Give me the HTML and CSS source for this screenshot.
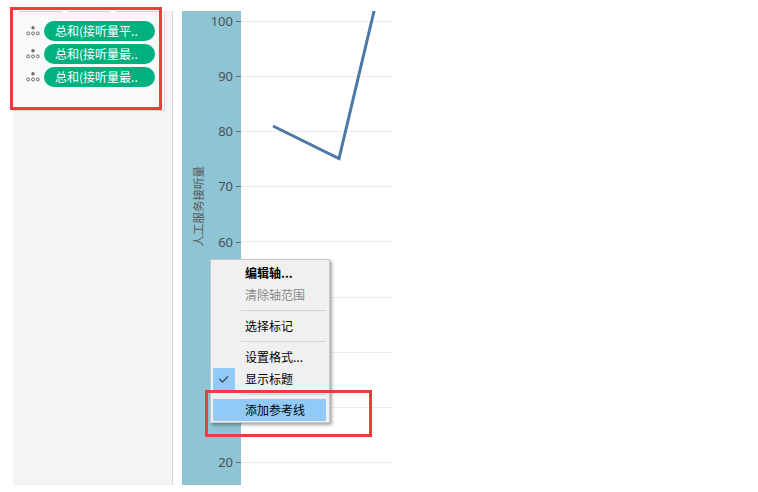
FILE: index.html
```html
<!DOCTYPE html>
<html lang="zh-CN">
<head>
  <meta charset="UTF-8">
  <meta name="viewport" content="width=device-width, initial-scale=1.0">
  <title>人工服务接听量</title>
  <link rel="stylesheet" href="styles.css">
</head>
<body>
  <div class="page">
    <aside class="shelf">
      <div class="card">
        <div class="card-head"><span></span><span></span><span></span></div>
        <ul class="pills">
          <li class="pill-row">
            <svg class="mn-icon" width="14" height="12" viewBox="0 0 14 12"><circle cx="7" cy="2.8" r="1.7" fill="#6f6f6f"/><circle cx="2.2" cy="8.4" r="1.5" fill="none" stroke="#6f6f6f"/><circle cx="7" cy="8.4" r="1.5" fill="none" stroke="#6f6f6f"/><circle cx="11.8" cy="8.4" r="1.5" fill="none" stroke="#6f6f6f"/></svg>
            <span class="pill">总和(接听量平..</span>
          </li>
          <li class="pill-row">
            <svg class="mn-icon" width="14" height="12" viewBox="0 0 14 12"><circle cx="7" cy="2.8" r="1.7" fill="#6f6f6f"/><circle cx="2.2" cy="8.4" r="1.5" fill="none" stroke="#6f6f6f"/><circle cx="7" cy="8.4" r="1.5" fill="none" stroke="#6f6f6f"/><circle cx="11.8" cy="8.4" r="1.5" fill="none" stroke="#6f6f6f"/></svg>
            <span class="pill">总和(接听量最..</span>
          </li>
          <li class="pill-row">
            <svg class="mn-icon" width="14" height="12" viewBox="0 0 14 12"><circle cx="7" cy="2.8" r="1.7" fill="#6f6f6f"/><circle cx="2.2" cy="8.4" r="1.5" fill="none" stroke="#6f6f6f"/><circle cx="7" cy="8.4" r="1.5" fill="none" stroke="#6f6f6f"/><circle cx="11.8" cy="8.4" r="1.5" fill="none" stroke="#6f6f6f"/></svg>
            <span class="pill">总和(接听量最..</span>
          </li>
        </ul>
      </div>
    </aside>

    <div class="axis">
      <div class="axis-title"><span>人工服务接听量</span></div>
      <ul class="ticks">
        <li><span>100</span><i></i></li>
        <li><span>90</span><i></i></li>
        <li><span>80</span><i></i></li>
        <li><span>70</span><i></i></li>
        <li><span>60</span><i></i></li>
        <li><span>50</span><i></i></li>
        <li><span>40</span><i></i></li>
        <li><span>30</span><i></i></li>
        <li><span>20</span><i></i></li>
      </ul>
    </div>

    <div class="plot">
      <svg width="151" height="474" viewBox="0 0 151 474">
        <g stroke="#ececec" stroke-width="1">
          <line x1="0" y1="10.5" x2="151" y2="10.5"/>
          <line x1="0" y1="65.5" x2="151" y2="65.5"/>
          <line x1="0" y1="120.5" x2="151" y2="120.5"/>
          <line x1="0" y1="175.5" x2="151" y2="175.5"/>
          <line x1="0" y1="230.5" x2="151" y2="230.5"/>
          <line x1="0" y1="286.5" x2="151" y2="286.5"/>
          <line x1="0" y1="341.5" x2="151" y2="341.5"/>
          <line x1="0" y1="396.5" x2="151" y2="396.5"/>
          <line x1="0" y1="451.5" x2="151" y2="451.5"/>
        </g>
        <polyline points="32,115 98,147.5 134,-4" fill="none" stroke="#4e79a7" stroke-width="3" stroke-linejoin="miter"/>
      </svg>
    </div>
  </div>

  <!-- context menu for the axis -->
  <div class="menu">
    <div class="menu-item bold"><span class="slot"></span>编辑轴...</div>
    <div class="menu-item disabled"><span class="slot"></span>清除轴范围</div>
    <div class="sep"></div>
    <div class="menu-item"><span class="slot"></span>选择标记</div>
    <div class="sep"></div>
    <div class="menu-item"><span class="slot"></span>设置格式...</div>
    <div class="menu-item"><span class="slot on"><svg width="22" height="22" viewBox="0 0 22 22"><polyline points="6.5,11 9.5,14 15,8.5" fill="none" stroke="#4a4a4a" stroke-width="1.4"/></svg></span>显示标题</div>
    <div class="sep"></div>
    <div class="menu-item active"><span class="slot"></span>添加参考线</div>
  </div>

  <div class="mark mark-shelf"></div>
  <div class="mark mark-menu"></div>
</body>
</html>
```

FILE: styles.css
```css
body {
  margin: 0;
  font-family: "Noto Sans", "Noto Sans CJK SC", sans-serif;
  background: #fff;
}
ul {
  list-style: none;
  margin: 0;
  padding: 0;
}
.page {
  display: flex;
  padding: 11px 0 0 13px;
  height: 474px;
}
.shelf {
  width: 159px;
  background-color: #f4f4f4;
  border-right: 1px solid #d9d9d9;
}
.card {
  width: 151px;
  height: 99px;
  background-color: #f9f9f9;
  border-right: 1px solid #d6d6d6;
  border-bottom: 1px solid #d6d6d6;
}
.card-head {
  display: flex;
  gap: 6px;
  padding: 0 5px 0 6px;
}
.card-head span {
  flex: 1;
  height: 1px;
  background-color: #cfcfcf;
}
.pills {
  display: flex;
  flex-direction: column;
  gap: 3px;
  margin-top: 9px;
  padding-left: 13px;
}
.pill-row {
  display: flex;
  align-items: center;
  gap: 4px;
}
.pill {
  width: 100px;
  height: 20px;
  padding-left: 11px;
  border-radius: 10px;
  background-color: #00b180;
  color: white;
  font-family: "Noto Sans CJK SC", sans-serif;
  font-size: 12px;
  line-height: 20px;
  white-space: nowrap;
}
.axis {
  display: flex;
  width: 59px;
  margin-left: 9px;
  background-color: #8ec4d3;
  overflow: hidden;
}
.axis-title {
  width: 14px;
  padding: 155px 0 0 9px;
}
.axis-title span {
  display: block;
  writing-mode: vertical-rl;
  text-orientation: sideways;
  transform: rotate(180deg);
  font-family: "Noto Sans CJK SC", sans-serif;
  font-size: 11.5px;
  line-height: 14px;
  color: #5a5a5a;
}
.ticks {
  flex: 1;
  padding-top: 2px;
}
.ticks li {
  display: flex;
  justify-content: flex-end;
  height: 55.15px;
  font-size: 13px;
  line-height: 16px;
  color: #505050;
}
.ticks i {
  width: 5px;
  height: 1px;
  margin: 8px 0 0 3px;
  background-color: #666;
}
.plot {
  width: 151px;
  overflow: hidden;
}
.plot svg {
  display: block;
}
.menu {
  position: absolute;
  left: 210px;
  top: 259px;
  width: 118px;
  padding: 2px 0 1px;
  background-color: #f0f0f0;
  border: 1px solid #c9c9c9;
  box-shadow: 2px 2px 3px rgba(0, 0, 0, 0.35);
  font-family: "Noto Sans CJK SC", sans-serif;
  font-size: 12px;
  color: #000;
}
.menu-item {
  display: flex;
  height: 22px;
  line-height: 22px;
  margin: 0 3px 0 2px;
  white-space: nowrap;
}
.menu-item .slot {
  width: 22px;
  height: 22px;
  margin-right: 10px;
}
.menu-item .slot.on {
  background-color: #91c9f7;
}
.menu-item .slot svg {
  display: block;
}
.menu-item.bold {
  font-weight: bold;
}
.menu-item.disabled {
  color: #8a8a8a;
}
.menu-item.active {
  background-color: #91c9f7;
}
.sep {
  height: 1px;
  margin: 4px 3px 4px 30px;
  background-color: #d4d4d4;
}
.mark {
  position: absolute;
  box-sizing: border-box;
  border: 3px solid #ee3b3b;
}
.mark-shelf {
  left: 10px;
  top: 7px;
  width: 152px;
  height: 103px;
}
.mark-menu {
  left: 205px;
  top: 390px;
  width: 167px;
  height: 47px;
}
```
